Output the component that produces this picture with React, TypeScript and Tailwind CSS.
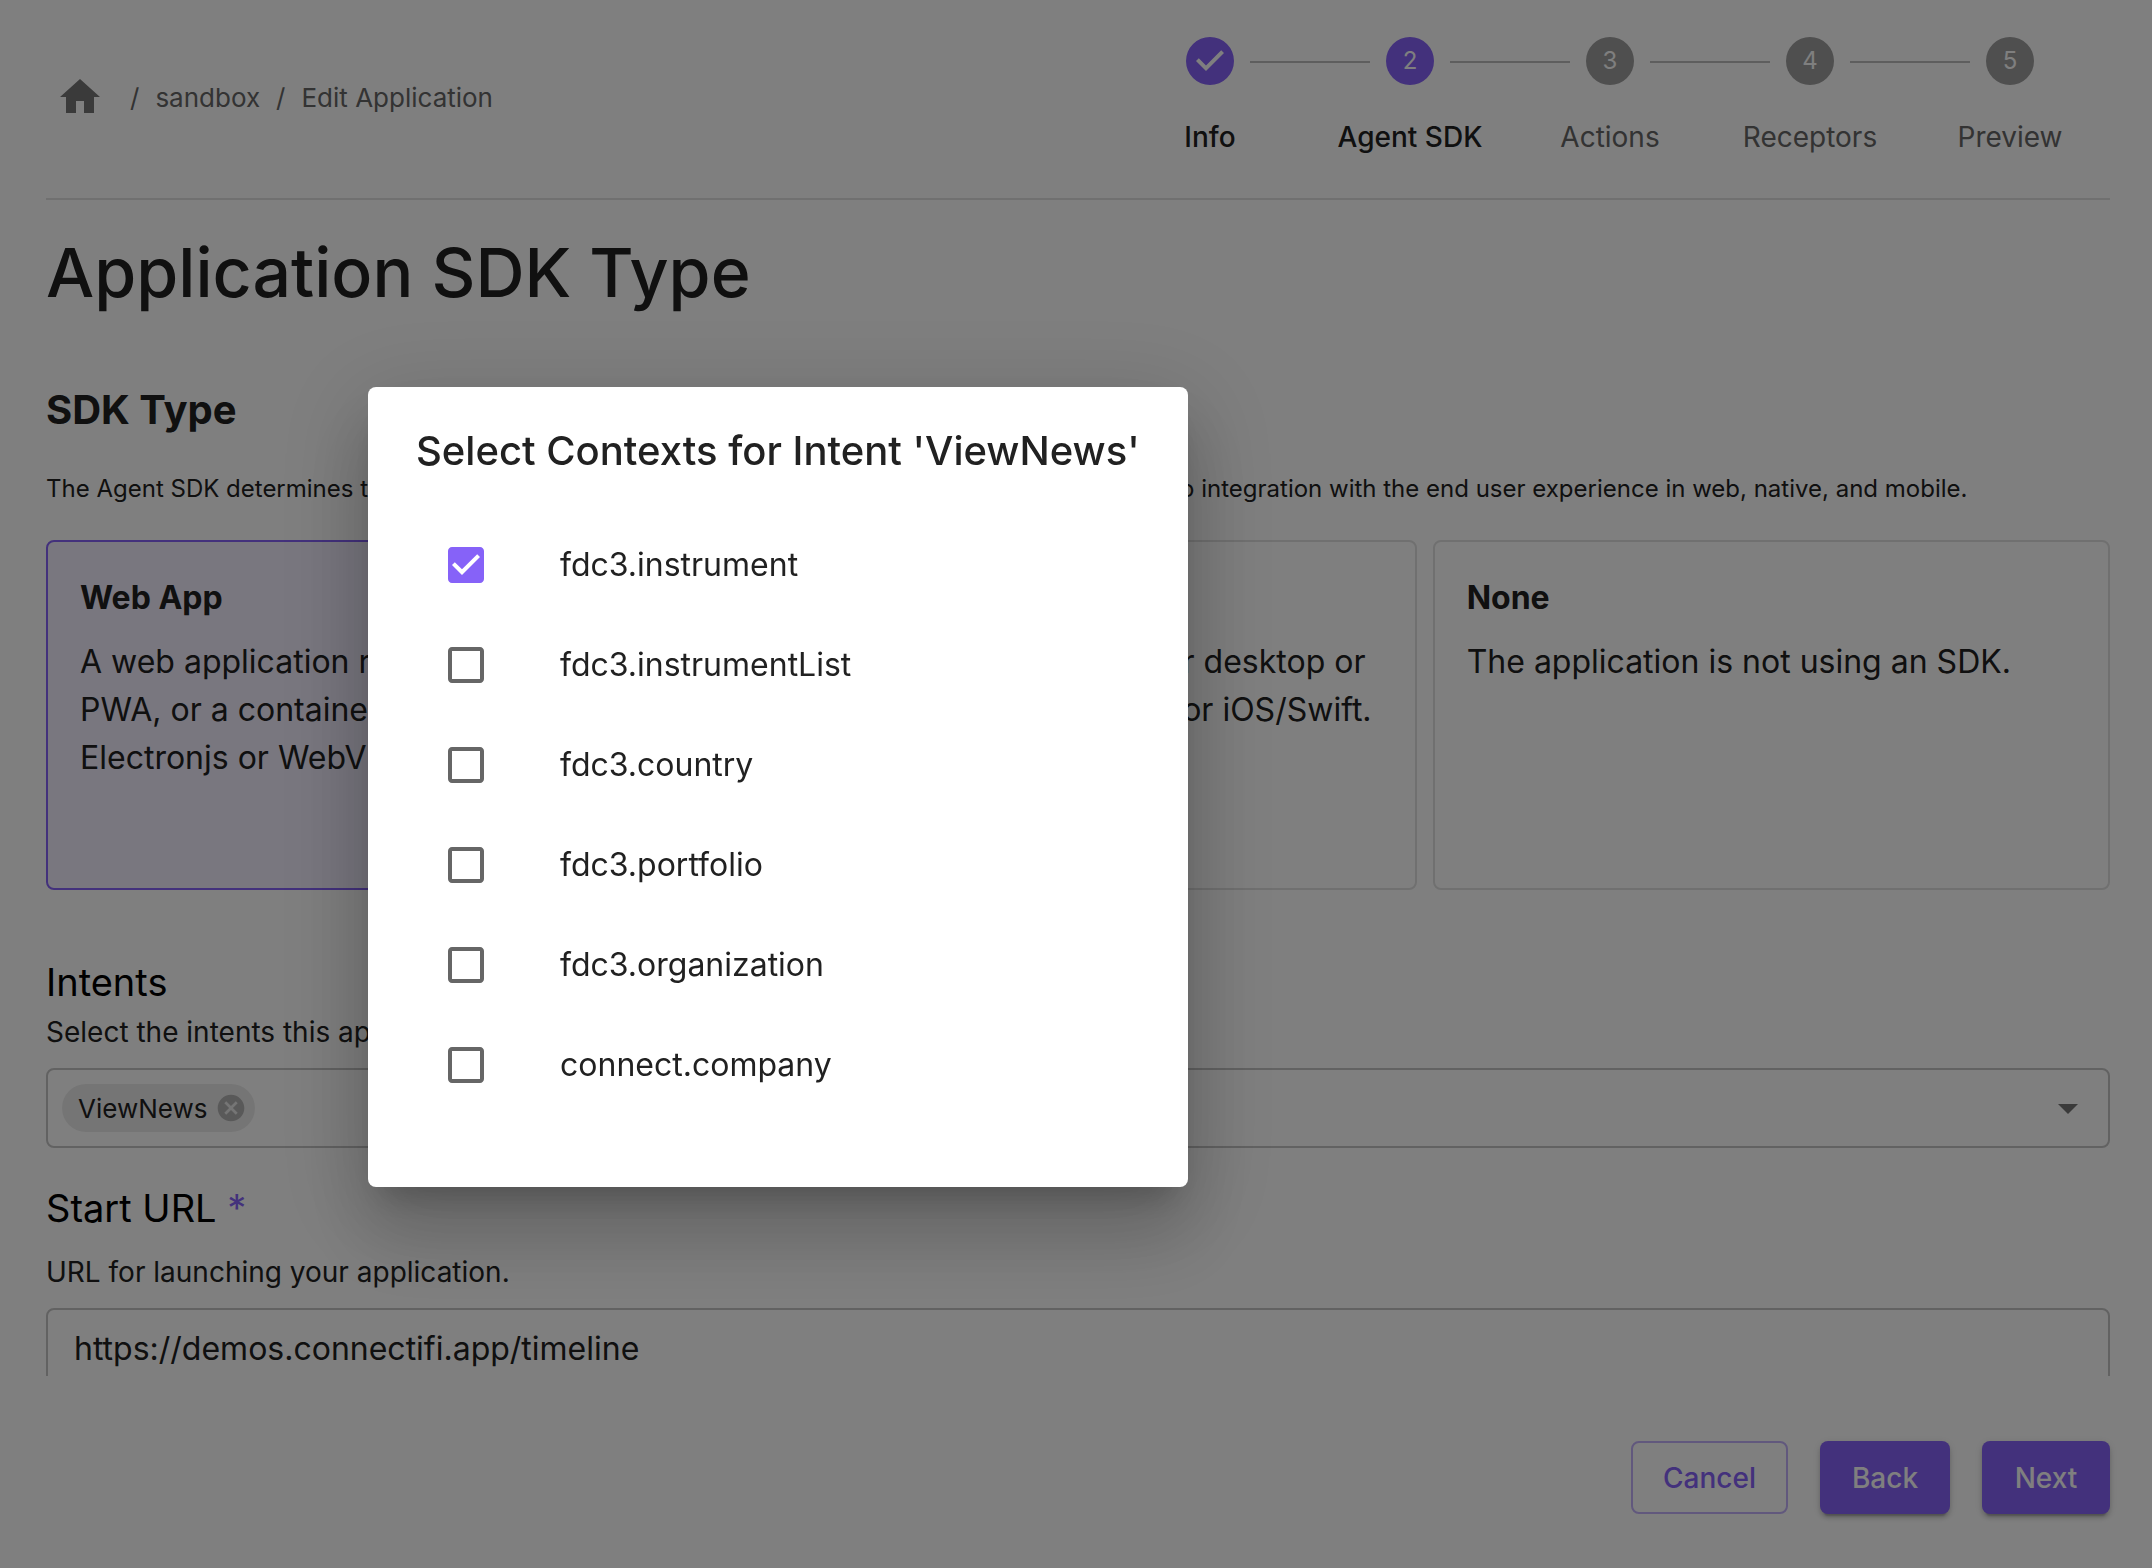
import * as React from 'react';

const steps = ['Info', 'Agent SDK', 'Actions', 'Receptors', 'Preview'];
const activeStep = 1;

const sdkTypes = [
  {
    id: 'web',
    name: 'Web App',
    lines: ['A web application running in a tab, a', 'PWA, or a container app such as', 'Electronjs or WebView2.'],
  },
  {
    id: 'native',
    name: 'Native',
    lines: ['A fully native application for desktop or', 'mobile apps in .NET, Java, or iOS/Swift.'],
  },
  { id: 'none', name: 'None', lines: ['The application is not using an SDK.'] },
];

const contexts = [
  'fdc3.instrument',
  'fdc3.instrumentList',
  'fdc3.country',
  'fdc3.portfolio',
  'fdc3.organization',
  'connect.company',
];

type IconProps = { path: string; className?: string };

function Icon({ path, className }: IconProps) {
  return (
    <svg viewBox="0 0 24 24" fill="currentColor" aria-hidden="true" className={className}>
      <path d={path} />
    </svg>
  );
}

const icons = {
  home: 'M10 20v-6h4v6h5v-8h3L12 3 2 12h3v8z',
  stepDone:
    'M12 0a12 12 0 1 0 0 24 12 12 0 0 0 0-24zm-2 17l-5-5 1.4-1.4 3.6 3.6 7.6-7.6L19 8l-9 9z',
  arrowDown: 'M7 10l5 5 5-5z',
  cancel:
    'M12 2C6.47 2 2 6.47 2 12s4.47 10 10 10 10-4.47 10-10S17.53 2 12 2zm5 13.59L15.59 17 12 13.41 8.41 17 7 15.59 10.59 12 7 8.41 8.41 7 12 10.59 15.59 7 17 8.41 13.41 12 17 15.59z',
  boxChecked:
    'M19 3H5c-1.11 0-2 .9-2 2v14c0 1.1.89 2 2 2h14c1.11 0 2-.9 2-2V5c0-1.1-.89-2-2-2zm-9 14l-5-5 1.41-1.41L10 14.17l7.59-7.59L19 8l-9 9z',
  boxBlank:
    'M19 5v14H5V5h14m0-2H5c-1.1 0-2 .9-2 2v14c0 1.1.9 2 2 2h14c1.1 0 2-.9 2-2V5c0-1.1-.9-2-2-2z',
};

function Stepper() {
  return (
    <ol className="flex">
      {steps.map((label, index) => {
        const reached = index <= activeStep;
        return (
          <li key={label} className="relative flex w-[200px] flex-col items-center gap-7">
            {index > 0 && (
              <span className="absolute top-6 right-[calc(50%+40px)] left-[calc(-50%+40px)] h-0.5 bg-[#bdbdbd]" />
            )}
            {index < activeStep ? (
              <Icon path={icons.stepDone} className="size-12 text-[#8662f8]" />
            ) : (
              <span
                className={`flex size-12 items-center justify-center rounded-full text-2xl text-white ${
                  reached ? 'bg-[#8662f8]' : 'bg-[#9e9e9e]'
                }`}
              >
                {index + 1}
              </span>
            )}
            <span
              className={`text-[28px] leading-12 whitespace-nowrap ${
                reached ? 'font-medium text-[#212121]' : 'text-[#666666]'
              }`}
            >
              {label}
            </span>
          </li>
        );
      })}
    </ol>
  );
}

function Header() {
  return (
    <header className="mr-[42px] ml-[46px] flex h-[200px] shrink-0 items-start justify-between border-b-2 border-[#e0e0e0] pt-[37px]">
      <nav aria-label="Breadcrumb" className="flex h-[120px] items-center pl-2.5 text-[26px] text-[#666666]">
        <a href="#home" aria-label="Home" className="text-[#757575]">
          <Icon path={icons.home} className="size-12" />
        </a>
        <span className="pr-4 pl-[26px]">/</span>
        <a href="#sandbox">sandbox</a>
        <span className="px-4">/</span>
        <span>Edit Application</span>
      </nav>
      <Stepper />
    </header>
  );
}

function ContextDialog() {
  const [selected, setSelected] = React.useState<string[]>(['fdc3.instrument']);

  const toggle = (name: string) => {
    setSelected((prev) => (prev.includes(name) ? prev.filter((n) => n !== name) : [...prev, name]));
  };

  return (
    <div className="fixed inset-0 flex items-center justify-center bg-black/50 pt-1.5 pr-[596px]">
      <div
        role="dialog"
        aria-modal="true"
        aria-labelledby="dialog-title"
        className="w-[820px] rounded-lg bg-white pb-[72px] shadow-[0_22px_30px_-14px_rgba(0,0,0,0.2),0_48px_76px_6px_rgba(0,0,0,0.14),0_18px_92px_16px_rgba(0,0,0,0.12)]"
      >
        <h2 id="dialog-title" className="px-12 py-8 text-[40px] leading-16 font-medium whitespace-nowrap">
          Select Contexts for Intent 'ViewNews'
        </h2>
        <ul>
          {contexts.map((name) => {
            const checked = selected.includes(name);
            return (
              <li key={name}>
                <label className="flex h-[100px] cursor-pointer items-center gap-[70px] pl-[74px] text-[32px]">
                  <span className="relative size-12">
                    <input
                      type="checkbox"
                      checked={checked}
                      onChange={() => toggle(name)}
                      className="absolute inset-0 size-12 cursor-pointer appearance-none"
                    />
                    <Icon
                      path={checked ? icons.boxChecked : icons.boxBlank}
                      className={`size-12 ${checked ? 'text-[#8662f8]' : 'text-[#666666]'}`}
                    />
                  </span>
                  {name}
                </label>
              </li>
            );
          })}
        </ul>
      </div>
    </div>
  );
}

function App() {
  const [sdkType, setSdkType] = React.useState('web');
  const [url, setUrl] = React.useState('https://demos.connectifi.app/timeline');

  return (
    <div className="flex h-screen flex-col bg-white font-['Inter',sans-serif] text-[#212121]">
      <Header />

      <main className="min-h-0 flex-1 overflow-y-auto pr-[42px] pl-[46px] [scrollbar-width:none]">
        <h1 className="pt-8 text-[68px] leading-20 font-medium">Application SDK Type</h1>

        <h2 className="mt-[66px] text-[40px] leading-16 font-bold">SDK Type</h2>
        <p className="mt-[29px] text-2xl leading-9 whitespace-nowrap">
          The Agent SDK determines the way your application connects to the service, and how it is adapted
          to integration with the end user experience in web, native, and mobile.
        </p>

        <div className="mt-[33px] grid grid-cols-3 gap-4">
          {sdkTypes.map((type) => (
            <button
              key={type.id}
              type="button"
              aria-pressed={sdkType === type.id}
              onClick={() => setSdkType(type.id)}
              className={`flex h-[350px] flex-col items-start gap-4 rounded-lg border-2 p-8 text-left text-[32px] leading-12 whitespace-nowrap ${
                sdkType === type.id ? 'border-[#8662f8] bg-[#f2eeff]' : 'border-[#e0e0e0]'
              }`}
            >
              <span className="font-bold">{type.name}</span>
              <span>
                {type.lines.map((line) => (
                  <span key={line} className="block">
                    {line}
                  </span>
                ))}
              </span>
            </button>
          ))}
        </div>

        <label htmlFor="intents" className="mt-[68px] block text-[38px] leading-12 text-black">
          Intents
        </label>
        <p className="mt-1.5 text-[28px] leading-10">Select the intents this application supports.</p>
        <div className="mt-4 flex h-20 items-center rounded-lg border-2 border-[#c4c4c4] pr-4 pl-3.5">
          <span className="flex h-12 items-center rounded-full bg-[#ebebeb] pr-2 pl-4 text-[26px]">
            ViewNews
            <button type="button" aria-label="Remove ViewNews" className="ml-2 text-[#b3b3b3]">
              <Icon path={icons.cancel} className="size-8" />
            </button>
          </span>
          <input
            id="intents"
            type="text"
            role="combobox"
            aria-expanded="false"
            className="min-w-0 flex-1 px-3 text-[32px] outline-none"
          />
          <button type="button" aria-label="Open" className="text-[#757575]">
            <Icon path={icons.arrowDown} className="size-12" />
          </button>
        </div>

        <label htmlFor="start-url" className="mt-9 block text-[38px] leading-12 text-black">
          Start URL <span className="text-[#8662f8]">*</span>
        </label>
        <p className="mt-5 text-[28px] leading-10">URL for launching your application.</p>
        <input
          id="start-url"
          type="text"
          value={url}
          onChange={(e) => setUrl(e.target.value)}
          className="mt-4 block h-20 w-full rounded-lg border-2 border-[#c4c4c4] px-[26px] text-[32px] outline-none"
        />
      </main>

      <footer className="mr-[42px] ml-[46px] flex h-48 shrink-0 items-start justify-end gap-8 pt-[65px] text-[28px] font-medium">
        <button type="button" className="h-[73px] w-[157px] rounded-lg border-2 border-[#c2b0fb] text-[#8662f8]">
          Cancel
        </button>
        <button
          type="button"
          className="h-[73px] w-[130px] rounded-lg bg-[#8662f8] text-white shadow-[0_6px_2px_-4px_rgba(0,0,0,0.2),0_4px_4px_0_rgba(0,0,0,0.14),0_2px_10px_0_rgba(0,0,0,0.12)]"
        >
          Back
        </button>
        <button
          type="button"
          className="h-[73px] w-32 rounded-lg bg-[#8662f8] text-white shadow-[0_6px_2px_-4px_rgba(0,0,0,0.2),0_4px_4px_0_rgba(0,0,0,0.14),0_2px_10px_0_rgba(0,0,0,0.12)]"
        >
          Next
        </button>
      </footer>

      <ContextDialog />
    </div>
  );
}

export default App;
